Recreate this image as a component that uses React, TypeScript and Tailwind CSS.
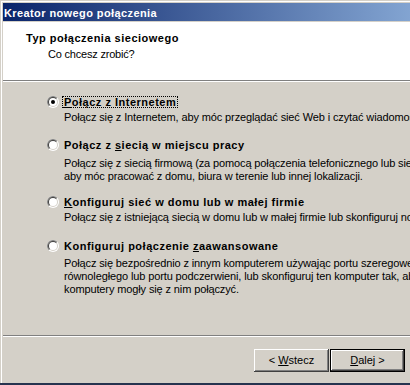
import React from "react";

const Radio = ({ checked }: { checked?: boolean }) => (
  <svg width="12" height="12" viewBox="0 0 12 12" className="shrink-0">
    <circle cx="6" cy="6" r="6" fill="#ffffff" />
    <path d="M1.757 10.243A6 6 0 0 1 10.243 1.757Z" fill="#808080" />
    <circle cx="6" cy="6" r="5" fill="#d4d0c8" />
    <path d="M2.464 9.536A5 5 0 0 1 9.536 2.464Z" fill="#404040" />
    <circle cx="6" cy="6" r="4" fill="#ffffff" />
    {checked && <circle cx="6" cy="6" r="2" fill="#000000" />}
  </svg>
);

const Label = ({ children, focused }: { children: React.ReactNode; focused?: boolean }) => (
  <div className="flex items-center h-[12px]">
    <Radio checked={focused} />
    <span
      className={
        focused
          ? "ml-[3px] h-[12px] leading-[10px] border border-dotted border-black px-px font-bold tracking-[0.5px] whitespace-nowrap"
          : "ml-[3px] h-[12px] leading-[10px] border border-transparent px-px font-bold tracking-[0.5px] whitespace-nowrap"
      }
    >
      {children}
    </span>
  </div>
);

export default function App() {
  return (
    <div className="w-[410px] h-[385px] overflow-hidden bg-[#d4d0c8] font-['Liberation_Sans',Arial,sans-serif] text-[11px] text-black flex flex-col">
      <div className="w-[530px] h-[383px] shrink-0 border-l border-t border-[#d4d0c8]">
        <div className="h-full border-l border-t border-white">
          <div className="h-full pl-px pt-px flex flex-col">
            {/* Title bar */}
            <div className="h-[18px] shrink-0 bg-[linear-gradient(to_right,#0a246a,#a6caf0)] pl-px pt-[4px]">
              <div className="leading-[13px] font-bold text-white tracking-[0.4px] whitespace-nowrap">
                Kreator nowego połączenia
              </div>
            </div>
            <div className="h-px shrink-0" />
            {/* Header */}
            <div className="h-[58px] shrink-0 bg-white pt-[10px]">
              <div className="pl-[23px] leading-[13px] font-bold tracking-[0.5px] whitespace-nowrap">
                Typ połączenia sieciowego
              </div>
              <div className="pl-[45px] mt-[3px] leading-[13px] tracking-[-0.2px] whitespace-nowrap">
                Co chcesz zrobić?
              </div>
            </div>
            <div className="h-px shrink-0 bg-[#808080]" />
            <div className="h-px shrink-0 bg-white" />
            {/* Body */}
            <div className="h-[253px] shrink-0 pl-[44px] pt-[14px] leading-[13px] whitespace-nowrap">
              <Label focused>
                <span className="underline">P</span>ołącz z Internetem
              </Label>
              <div className="mt-[3px] ml-[17px] tracking-[-0.12px]">
                Połącz się z Internetem, aby móc przeglądać sieć Web i czytać wiadomości e-mail.
              </div>

              <div className="mt-[15px]">
                <Label>
                  Połącz z <span className="underline">s</span>iecią w miejscu pracy
                </Label>
              </div>
              <div className="mt-[6px] ml-[17px] tracking-[-0.12px]">
                <div>Połącz się z siecią firmową (za pomocą połączenia telefonicznego lub sieci VPN),</div>
                <div>aby móc pracować z domu, biura w terenie lub innej lokalizacji.</div>
              </div>

              <div className="mt-[13px]">
                <Label>
                  <span className="underline">K</span>onfiguruj sieć w domu lub w małej firmie
                </Label>
              </div>
              <div className="mt-[3px] ml-[17px] tracking-[-0.12px]">
                Połącz się z istniejącą siecią w domu lub w małej firmie lub skonfiguruj nową.
              </div>

              <div className="mt-[16px]">
                <Label>
                  Konfiguruj połączenie <span className="underline">z</span>aawansowane
                </Label>
              </div>
              <div className="mt-[5px] ml-[17px] tracking-[-0.12px]">
                <div>Połącz się bezpośrednio z innym komputerem używając portu szeregowego,</div>
                <div>równoległego lub portu podczerwieni, lub skonfiguruj ten komputer tak, aby inne</div>
                <div>komputery mogły się z nim połączyć.</div>
              </div>
            </div>
            <div className="h-px shrink-0 bg-[#808080]" />
            <div className="h-px shrink-0 bg-white" />
            {/* Footer */}
            <div className="flex-1 pt-[12px] pl-[251px] flex items-start">
              <button className="w-[75px] h-[23px] flex items-center justify-center leading-[13px] bg-[#d4d0c8] shadow-[inset_-1px_-1px_0_#404040,inset_1px_1px_0_#ffffff,inset_-2px_-2px_0_#808080,inset_2px_2px_0_#d4d0c8]">
                &lt; <span className="underline ml-[3px]">W</span>stecz
              </button>
              <button className="ml-px w-[75px] h-[23px] flex items-center justify-center leading-[13px] bg-[#d4d0c8] border border-black shadow-[inset_-1px_-1px_0_#404040,inset_1px_1px_0_#ffffff,inset_-2px_-2px_0_#808080]">
                <span className="underline">D</span>alej &gt;
              </button>
            </div>
          </div>
        </div>
      </div>
      <div className="h-[2px] shrink-0 bg-[#26334f]" />
    </div>
  );
}
